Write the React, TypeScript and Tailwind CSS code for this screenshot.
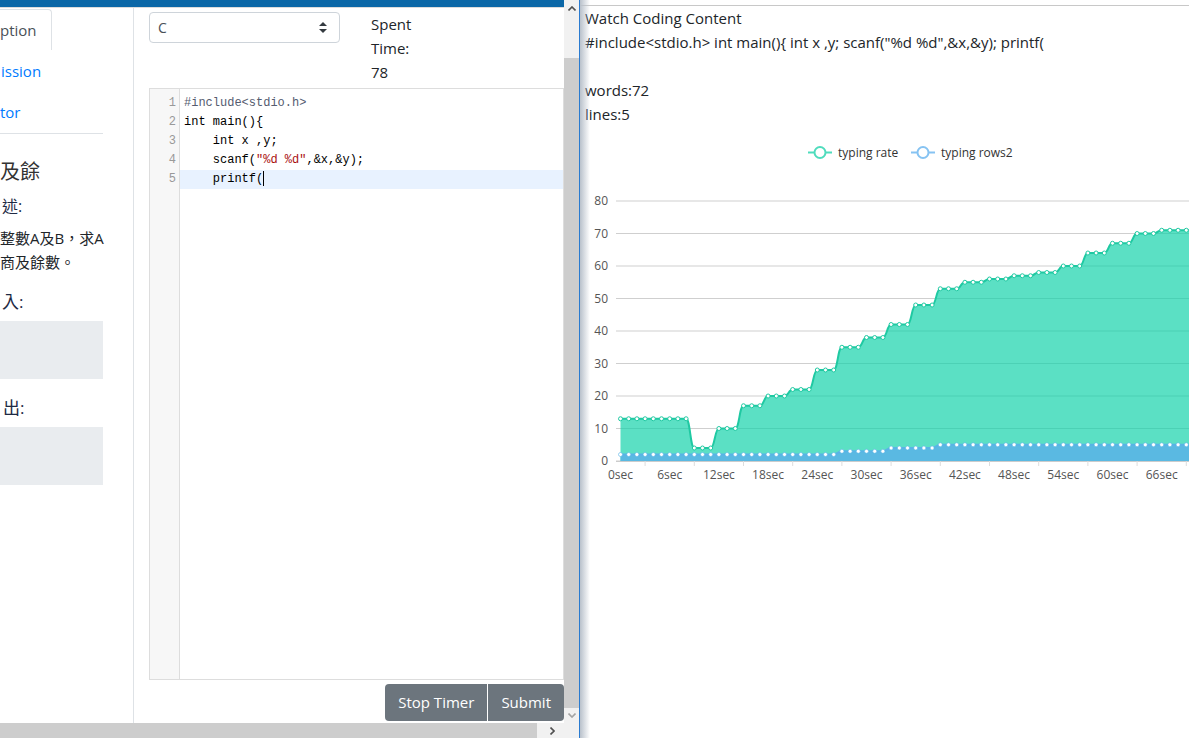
import React from "react";

const rate = expand([
  [13, 9], [4, 3], [10, 3], [17, 3], [20, 3], [22, 3], [28, 3], [35, 3], [38, 3], [42, 3],
  [48, 3], [53, 3], [55, 3], [56, 3], [57, 3], [58, 3], [60, 3], [64, 3], [67, 3], [70, 3], [71, 5],
]);
const rows = expand([[2, 27], [3, 6], [4, 6], [5, 32]]);

function expand(groups: [number, number][]) {
  const out: number[] = [];
  groups.forEach(([v, n]) => {
    for (let i = 0; i < n; i++) out.push(v);
  });
  return out;
}

const px = (i: number) => 620.5 + 8.2 * i;
const py = (v: number) => 461 - 3.25 * v;

function linePath(vals: number[]) {
  let d = `M${px(0)},${py(vals[0])}`;
  for (let i = 1; i < vals.length; i++) {
    const x0 = px(i - 1);
    const x1 = px(i);
    const cx = (x0 + x1) / 2;
    d += ` C${cx},${py(vals[i - 1])} ${cx},${py(vals[i])} ${x1},${py(vals[i])}`;
  }
  return d;
}

function areaPath(vals: number[]) {
  return linePath(vals) + ` L${px(vals.length - 1)},461 L${px(0)},461 Z`;
}

function Chart() {
  const yTicks = [0, 10, 20, 30, 40, 50, 60, 70, 80];
  const xLabels = [0, 6, 12, 18, 24, 30, 36, 42, 48, 54, 60, 66];
  return (
    <svg width="609" height="374" viewBox="580 126 609 374" className="block">
      {/* legend */}
      <g fontFamily="Open Sans, sans-serif" fontSize="12" fill="#333">
        <line x1="808" y1="152.5" x2="832" y2="152.5" stroke="#4fdcbd" strokeWidth="2" />
        <circle cx="820" cy="152.5" r="5.5" fill="#fff" stroke="#4fdcbd" strokeWidth="2" />
        <text x="838" y="156.5">typing rate</text>
        <line x1="911" y1="152.5" x2="935" y2="152.5" stroke="#86c3f2" strokeWidth="2" />
        <circle cx="923" cy="152.5" r="5.5" fill="#fff" stroke="#86c3f2" strokeWidth="2" />
        <text x="941" y="156.5">typing rows2</text>
      </g>

      {/* grid */}
      {yTicks.map((v) => (
        <g key={v}>
          <line x1="616" x2="1189" y1={py(v)} y2={py(v)} stroke="#cfcfcf" strokeWidth="1" />
          <text x="608" y={py(v) + 4} textAnchor="end" fontSize="12" fill="#555" fontFamily="Open Sans, sans-serif">
            {v}
          </text>
        </g>
      ))}

      {/* series */}
      <path d={areaPath(rate)} fill="rgb(14,210,168)" fillOpacity="0.68" />
      <path d={linePath(rate)} fill="none" stroke="#1fc9a2" strokeWidth="2" />
      <path d={areaPath(rows)} fill="#5ab9e2" />
      <path d={linePath(rows)} fill="none" stroke="#58b4e6" strokeWidth="2" />
      {rate.map((v, i) => (
        <circle key={"r" + i} cx={px(i)} cy={py(v)} r="2" fill="#fff" stroke="#1fc9a2" strokeWidth="1" />
      ))}
      {rows.map((v, i) => (
        <circle key={"w" + i} cx={px(i)} cy={py(v)} r="2" fill="#fff" stroke="#58b4e6" strokeWidth="0.6" />
      ))}

      {/* x axis */}
      <line x1="616" x2="1189" y1="461.5" y2="461.5" stroke="#ccc" />
      {xLabels.map((s) => (
        <g key={s}>
          <line x1={px(s + 3)} x2={px(s + 3)} y1="461" y2="466" stroke="#ddd" />
          <text x={px(s)} y="479" textAnchor="middle" fontSize="12" fill="#555" fontFamily="Open Sans, sans-serif">
            {s}sec
          </text>
        </g>
      ))}
    </svg>
  );
}

function SelectArrow() {
  return (
    <svg width="8" height="11" viewBox="0 0 8 11">
      <path d="M4 0 L8 4 H0 Z" fill="#343a40" />
      <path d="M4 11 L8 7 H0 Z" fill="#343a40" />
    </svg>
  );
}

function CodeEditor() {
  const lines: React.ReactNode[] = [
    <span className="text-[#555c70]">#include&lt;stdio.h&gt;</span>,
    <>int main(){"{"}</>,
    <>{"    int x ,y;"}</>,
    <>
      {"    scanf("}
      <span className="text-[#aa1111]">"%d %d"</span>
      {",&x,&y);"}
    </>,
    <>
      {"    printf("}
      <span className="inline-block h-[15px] w-px bg-black align-middle" />
    </>,
  ];
  return (
    <div className="mt-[4px] flex h-[592px] border border-[#dddddd] bg-white font-['Liberation_Mono',monospace] text-[12px] leading-[19px]">
      <div className="w-[30px] shrink-0 border-r border-[#dddddd] bg-[#f7f7f7] pt-[5px] pr-[3px] text-right text-[#999]">
        {lines.map((_, i) => (
          <div key={i}>{i + 1}</div>
        ))}
      </div>
      <div className="flex-1 pt-[5px]">
        {lines.map((l, i) => (
          <div key={i} className={"whitespace-pre pl-[4px] text-black " + (i === 4 ? "bg-[#e8f2ff]" : "")}>
            {l}
          </div>
        ))}
      </div>
    </div>
  );
}

function LeftPane() {
  return (
    <div className="flex w-[579px] shrink-0 flex-col">
      <div className="flex h-[723px]">
        <div className="flex min-w-0 flex-1 flex-col overflow-hidden">
          <div className="h-[7px] bg-[#0b67a7]" />
          <div className="h-px bg-[#dcdcdc]" />
          <div className="flex flex-1">
            {/* left nav column */}
            <div className="w-[134px] shrink-0 overflow-hidden border-r border-[#dee2e6] pr-[30px]">
              <div className="w-[103px]">
                <div className="mt-px border-b border-[#dee2e6] text-[15px]">
                  <div className="flex h-[41px] w-[52px] items-center whitespace-nowrap rounded-tr-[4px] border-t border-r border-[#dee2e6] text-[#495057]">
                    ption
                  </div>
                  <div className="flex h-[42px] items-center whitespace-nowrap pl-px text-[#007bff]">
                    ission
                  </div>
                  <div className="flex h-[41px] items-center whitespace-nowrap text-[#007bff]">
                    tor
                  </div>
                </div>
                <div className="mt-[21px] text-[20px] leading-[33px] text-[#333]">及餘</div>
                <div className="mt-[6px] pl-[2px] text-[16px] leading-[24px] text-[#1e2a44]">述:</div>
                <div className="mt-[8px] whitespace-nowrap text-[15px] leading-[24px] text-[#212529]">
                  <div>整數A及B，求A</div>
                  <div>商及餘數。</div>
                </div>
                <div className="mt-[16px] pl-[2px] text-[17px] leading-[24px] text-[#1e2a44]">入:</div>
                <div className="mt-[7px] h-[58px] bg-[#e9ecef]" />
                <div className="mt-[17px] pl-[3px] text-[17px] leading-[24px] text-[#1e2a44]">出:</div>
                <div className="mt-[7px] h-[58px] bg-[#e9ecef]" />
              </div>
            </div>

            {/* main column */}
            <div className="flex-1 pt-[4px] pl-[15px]">
              <div className="flex">
                <div className="flex h-[31px] w-[191px] items-center justify-between rounded-[4px] border border-[#ced4da] pr-[12px] pl-[8px] text-[14px] text-[#495057]">
                  <span>C</span>
                  <SelectArrow />
                </div>
                <div className="ml-[31px] w-[48px] text-[15px] leading-[24px] text-[#212529]">
                  Spent Time: 78
                </div>
              </div>
              <CodeEditor />
              <div className="mt-[4px] flex justify-end">
                <div className="flex h-[37px] items-center rounded-l-[4px] bg-[#6c757d] px-[13px] text-[15px] text-white">
                  Stop Timer
                </div>
                <div className="ml-px flex h-[37px] items-center rounded-r-[4px] bg-[#6c757d] px-[13px] text-[15px] text-white">
                  Submit
                </div>
              </div>
            </div>
          </div>
        </div>

        {/* vertical scrollbar */}
        <div className="flex w-[15px] shrink-0 flex-col bg-[#f1f1f1]">
          <div className="flex h-[17px] items-center justify-center">
            <svg width="8" height="5" viewBox="0 0 8 5">
              <path d="M0.5 4.5 L4 1 L7.5 4.5" fill="none" stroke="#505050" strokeWidth="1.6" />
            </svg>
          </div>
          <div className="h-[41px]" />
          <div className="h-[650px] bg-[#cdcdcd]" />
          <div className="flex flex-1 items-center justify-center">
            <svg width="8" height="5" viewBox="0 0 8 5">
              <path d="M0.5 0.5 L4 4 L7.5 0.5" fill="none" stroke="#a3a3a3" strokeWidth="1.6" />
            </svg>
          </div>
        </div>
      </div>

      {/* horizontal scrollbar */}
      <div className="flex h-[15px] bg-[#f1f1f1]">
        <div className="w-[537px] bg-[#cdcdcd]" />
        <div className="flex w-[27px] items-center justify-end pr-[9px]">
          <svg width="5" height="8" viewBox="0 0 5 8">
            <path d="M0.5 0.5 L4 4 L0.5 7.5" fill="none" stroke="#505050" strokeWidth="1.6" />
          </svg>
        </div>
        <div className="flex-1" />
      </div>
    </div>
  );
}

function RightPane() {
  return (
    <div className="relative min-w-0 flex-1 overflow-hidden bg-white">
      <div className="mt-[5px] border-t border-[#c8c8c8] pl-[5px] text-[15px] leading-[24px] whitespace-nowrap text-[#212529]">
        <div>Watch Coding Content</div>
        <div>#include&lt;stdio.h&gt; int main(){"{"} int x ,y; scanf("%d %d",&amp;x,&amp;y); printf(</div>
        <div className="h-[24px]" />
        <div>words:72</div>
        <div>lines:5</div>
      </div>
      <Chart />
      <div className="pointer-events-none absolute inset-y-0 left-0 w-[10px] bg-linear-to-r from-[#b9c1cb] to-transparent" />
    </div>
  );
}

export default function App() {
  return (
    <div className="flex h-[738px] w-[1189px] overflow-hidden bg-white font-['Open_Sans','Noto_Sans_CJK_TC',sans-serif]">
      <LeftPane />
      <div className="w-px shrink-0 bg-[#2a7bd0]" />
      <RightPane />
    </div>
  );
}
